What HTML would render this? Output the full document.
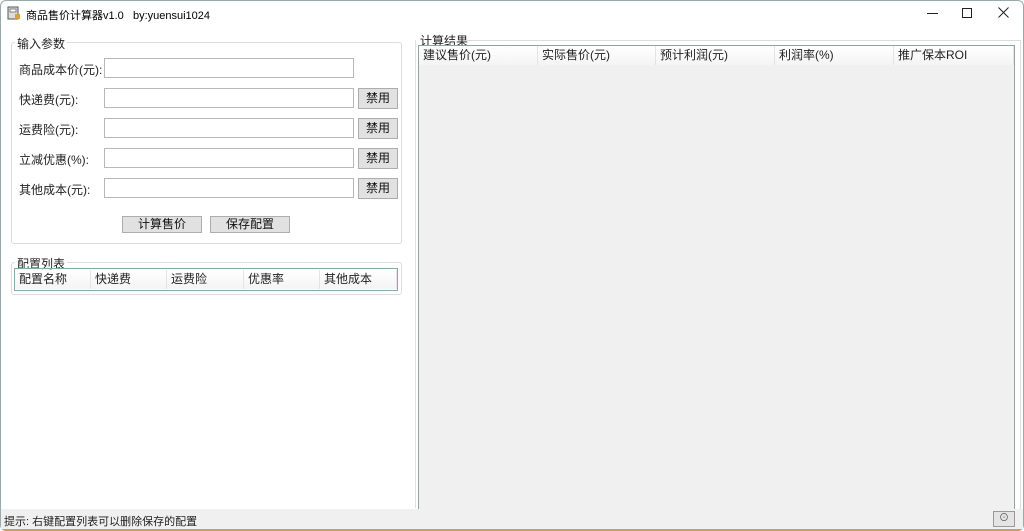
<!DOCTYPE html><html><head><meta charset="utf-8"><style>
*{margin:0;padding:0;box-sizing:border-box}
body{width:1024px;height:531px;overflow:hidden;background:#fff;font-family:"Liberation Sans","Microsoft YaHei","Noto Sans CJK SC",sans-serif;font-size:12px;color:#000;position:relative}
.a{position:absolute}
.win{position:absolute;left:0;top:0;width:1024px;height:531px;border:1px solid #9aa;border-bottom:2px solid #c9a060;border-radius:6px 6px 6px 6px}
.lbl{position:absolute;font-size:12px;color:#222}
.inp{position:absolute;left:104px;width:250px;height:20px;border:1px solid #b8b8b8;background:#fff}
.btn{position:absolute;background:#e1e1e1;border:1px solid #adadad;font-size:12px;text-align:center;line-height:16px;color:#111}
.gb{position:absolute;border:1px solid #dcdcdc;border-radius:3px}
.gt{position:absolute;background:#fff;padding:0 2px;font-size:12px;color:#222}
.hd{position:absolute;height:19px;background:linear-gradient(#fff,#f4f4f4);border-right:1px solid #e4e4e4;font-size:12px;line-height:19px;padding-left:4px;color:#222}
</style></head><body>
<div class="win"></div>
<svg class="a" style="left:7px;top:6px" width="14" height="14" viewBox="0 0 14 14"><rect x="1" y="1" width="10" height="12" fill="#ddd" stroke="#555"/><rect x="3" y="3" width="6" height="3" fill="#fff" stroke="#555" stroke-width=".7"/><rect x="8" y="8" width="5" height="5" fill="#d8a040"/></svg>
<div class="a" style="left:26px;top:7px;font-size:11px">商品售价计算器v1.0&nbsp;&nbsp; by:yuensui1024</div>
<div class="a" style="left:927px;top:13px;width:11px;height:1px;background:#222"></div>
<div class="a" style="left:962px;top:8px;width:10px;height:10px;border:1px solid #222"></div>
<svg class="a" style="left:998px;top:7px" width="11" height="11" viewBox="0 0 11 11"><path d="M0.5 0.5L10.5 10.5M10.5 0.5L0.5 10.5" stroke="#222" stroke-width="1"/></svg>

<div class="gb" style="left:11px;top:42px;width:391px;height:202px"></div>
<div class="gt" style="left:15px;top:35px">输入参数</div>
<div class="lbl" style="left:19px;top:61px">商品成本价(元):</div><div class="inp" style="top:58px"></div>
<div class="lbl" style="left:19px;top:91px">快递费(元):</div><div class="inp" style="top:88px"></div><div class="btn" style="left:358px;top:88px;width:40px;height:21px;line-height:19px">禁用</div>
<div class="lbl" style="left:19px;top:121px">运费险(元):</div><div class="inp" style="top:118px"></div><div class="btn" style="left:358px;top:118px;width:40px;height:21px;line-height:19px">禁用</div>
<div class="lbl" style="left:19px;top:151px">立减优惠(%):</div><div class="inp" style="top:148px"></div><div class="btn" style="left:358px;top:148px;width:40px;height:21px;line-height:19px">禁用</div>
<div class="lbl" style="left:19px;top:181px">其他成本(元):</div><div class="inp" style="top:178px"></div><div class="btn" style="left:358px;top:178px;width:40px;height:21px;line-height:19px">禁用</div>
<div class="btn" style="left:122px;top:216px;width:80px;height:17px;line-height:15px">计算售价</div>
<div class="btn" style="left:210px;top:216px;width:80px;height:17px;line-height:15px">保存配置</div>

<div class="gb" style="left:11px;top:262px;width:391px;height:33px"></div>
<div class="gt" style="left:15px;top:255px">配置列表</div>
<div class="a" style="left:14px;top:268px;width:384px;height:23px;border:1px solid #8aa"></div>
<div class="hd" style="left:15px;top:270px;width:76px">配置名称</div>
<div class="hd" style="left:91px;top:270px;width:76px">快递费</div>
<div class="hd" style="left:167px;top:270px;width:77px">运费险</div>
<div class="hd" style="left:244px;top:270px;width:76px">优惠率</div>
<div class="hd" style="left:320px;top:270px;width:77px">其他成本</div>

<div class="a" style="left:415px;top:40px;width:1px;height:468px;background:#e0e0e0"></div>
<div class="gt" style="left:418px;top:32px">计算结果</div>
<div class="a" style="left:466px;top:40px;width:555px;height:1px;background:#dcdcdc"></div>
<div class="a" style="left:418px;top:45px;width:597px;height:464px;background:#f0f0f0;border:1px solid #8fa8a0;border-bottom:none"></div>
<div class="a" style="left:1020px;top:40px;width:1px;height:469px;background:#dcdcdc"></div>
<div class="hd" style="left:419px;top:46px;width:119px">建议售价(元)</div>
<div class="hd" style="left:538px;top:46px;width:118px">实际售价(元)</div>
<div class="hd" style="left:656px;top:46px;width:119px">预计利润(元)</div>
<div class="hd" style="left:775px;top:46px;width:119px">利润率(%)</div>
<div class="hd" style="left:894px;top:46px;width:120px">推广保本ROI</div>

<div class="a" style="left:1px;top:509px;width:1022px;height:20px;background:#f0f0f0"></div>
<div class="a" style="left:4px;top:513px;font-size:11px;color:#222">提示: 右键配置列表可以删除保存的配置</div>
<div class="a" style="left:993px;top:511px;width:22px;height:16px;border:1px solid #999;background:#e4e4e4;text-align:center;font-size:10px;line-height:14px;color:#555">⊙</div>
</body></html>
